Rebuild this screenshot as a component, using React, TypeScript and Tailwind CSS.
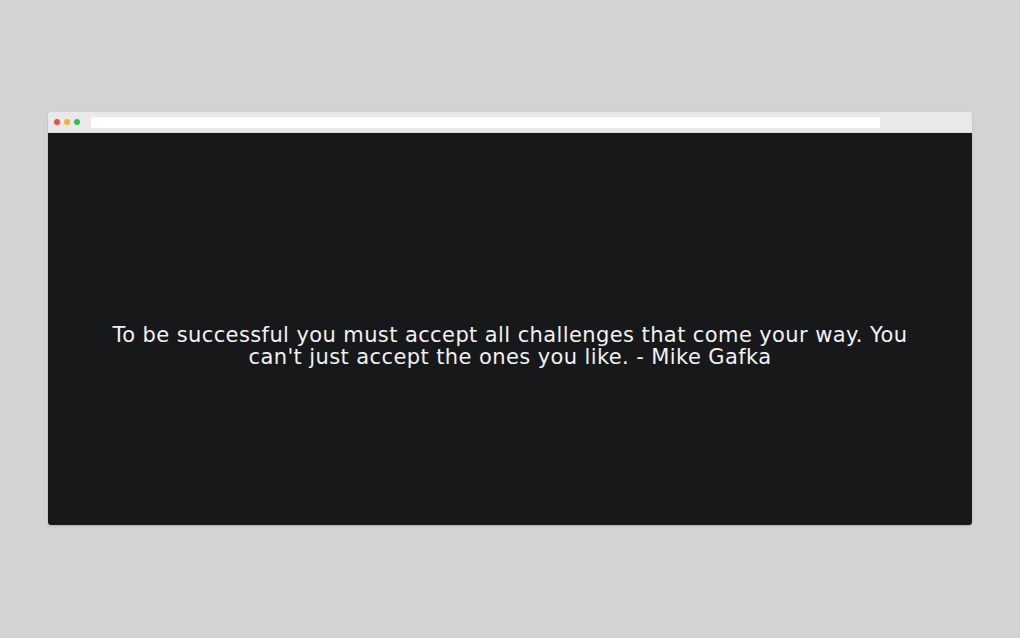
const App = () => {
  return (
    <div className="w-[1020px] h-[638px] bg-[#d3d3d3] pt-[112px] px-[48px]">
      <div className="w-[924px] rounded-[3px] overflow-hidden shadow-[0_1px_2px_rgba(0,0,0,0.15)]">
        <div className="h-[21px] bg-[#e9e9e9] flex items-center pl-[6px] pr-[92px] border-b border-[#d8d8d8]">
          <div className="flex items-center gap-[4px]">
            <span className="w-[6px] h-[6px] rounded-full bg-[#ef4b4b]" />
            <span className="w-[6px] h-[6px] rounded-full bg-[#f5b52b]" />
            <span className="w-[6px] h-[6px] rounded-full bg-[#2fc24a]" />
          </div>
          <div className="ml-[11px] flex-1 h-[11px] bg-white" />
        </div>
        <div className="h-[392px] bg-[#17181a] flex items-center justify-center pt-[33px]">
          <p
            className="text-[#f1f1f1] text-center text-[21px] leading-[22px] w-[810px] tracking-[0.4px]"
            style={{ fontFamily: '"DejaVu Sans", sans-serif' }}
          >
            To be successful you must accept all challenges that come your way. You
            can't just accept the ones you like. - Mike Gafka
          </p>
        </div>
      </div>
    </div>
  )
}

export default App
